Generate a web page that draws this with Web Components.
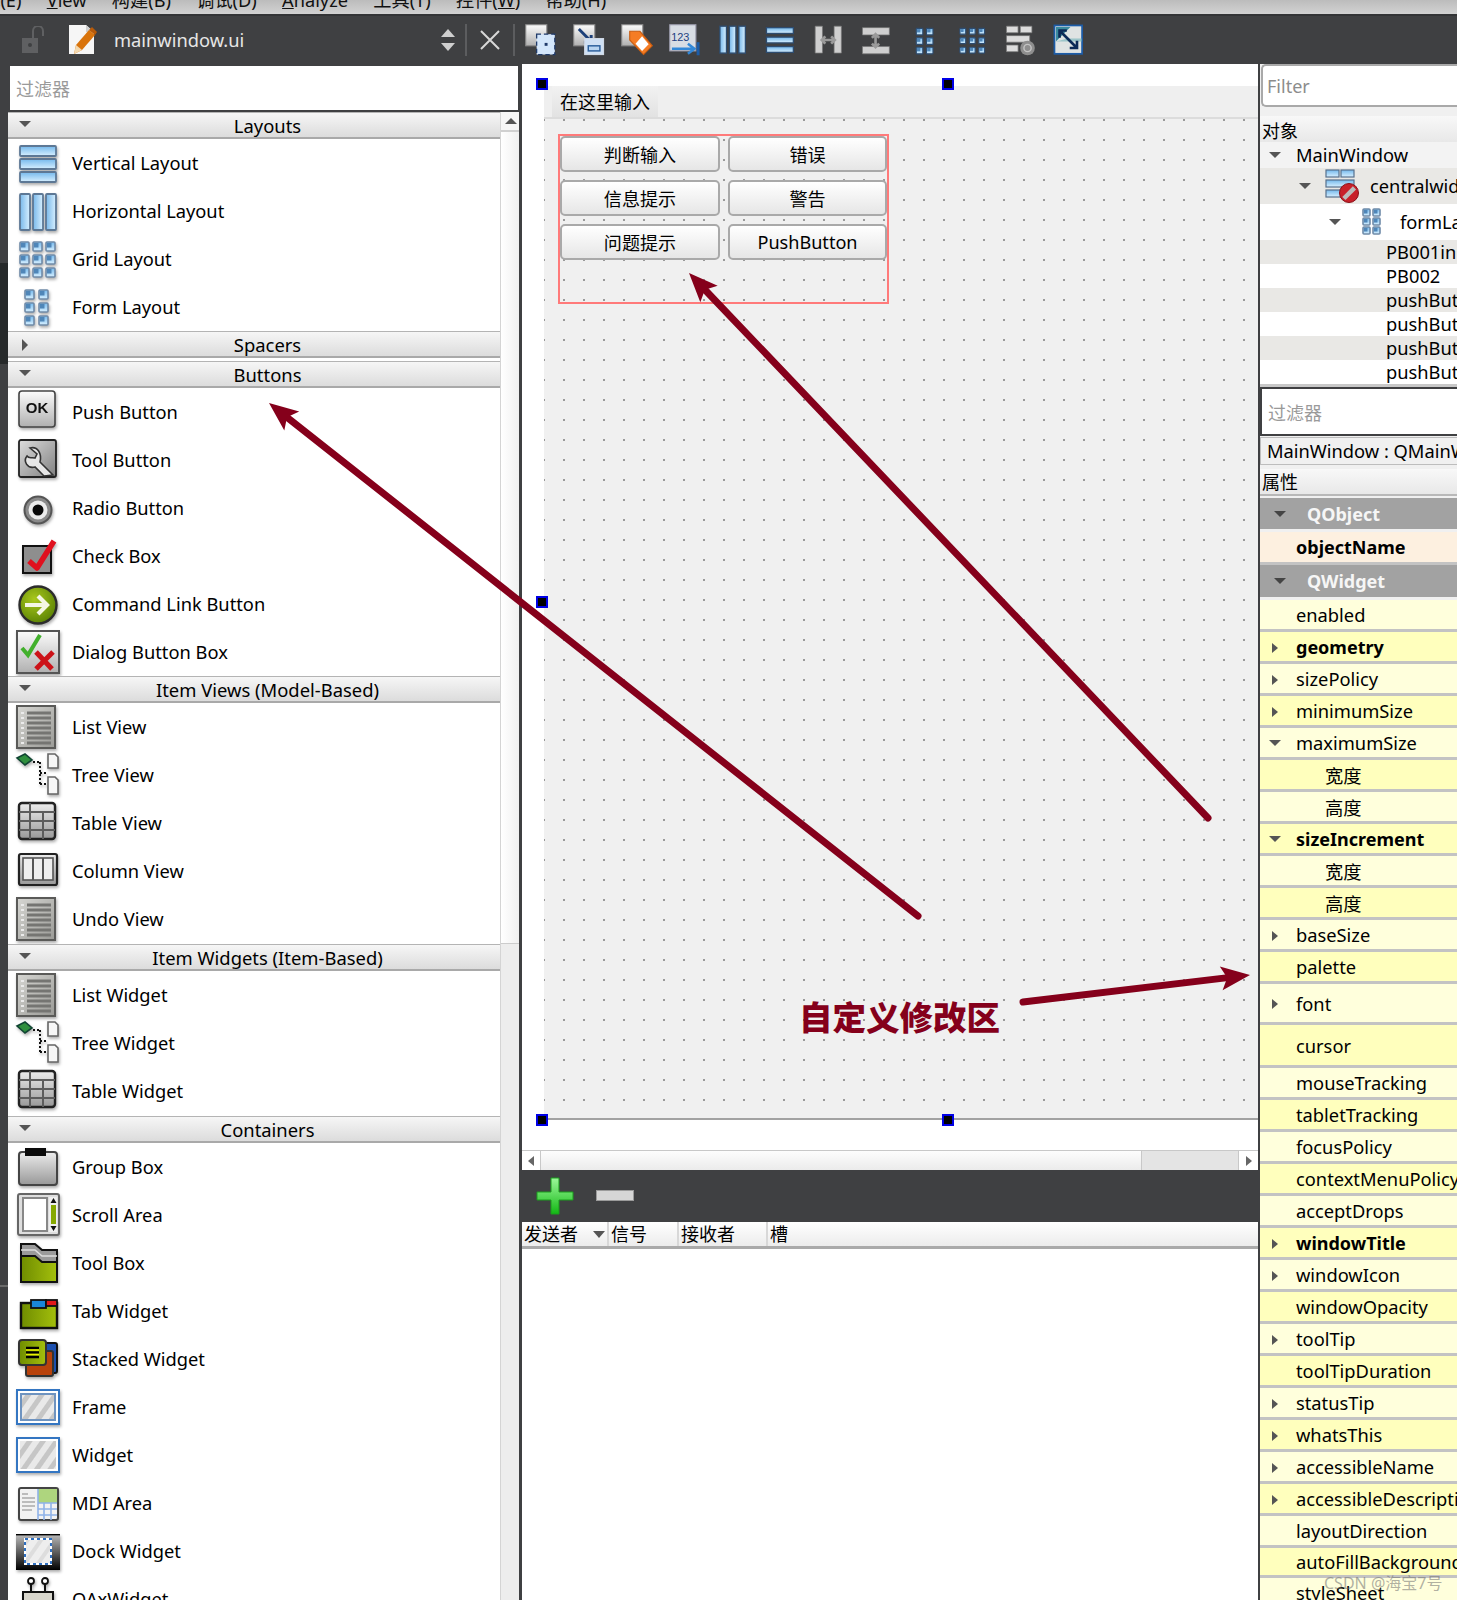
<!DOCTYPE html>
<html lang="zh">
<head>
<meta charset="utf-8">
<title>Qt Designer</title>
<style>
  html, body { margin: 0; padding: 0; background: #3f4042; }
</style>
</head>
<body>
<qd-app>
  <qd-menubar slot="menu"></qd-menubar>
  <qd-toolbar slot="tools"></qd-toolbar>

  <qd-widget-box slot="left">
    <qd-section title="Layouts">
      <qd-item icon="vlayout">Vertical Layout</qd-item>
      <qd-item icon="hlayout">Horizontal Layout</qd-item>
      <qd-item icon="grid">Grid Layout</qd-item>
      <qd-item icon="form">Form Layout</qd-item>
    </qd-section>
    <qd-section title="Spacers" closed></qd-section>
    <qd-section title="Buttons" style="margin-top:3px">
      <qd-item icon="ok">Push Button</qd-item>
      <qd-item icon="wrench">Tool Button</qd-item>
      <qd-item icon="radio">Radio Button</qd-item>
      <qd-item icon="check">Check Box</qd-item>
      <qd-item icon="link">Command Link Button</qd-item>
      <qd-item icon="dialog">Dialog Button Box</qd-item>
    </qd-section>
    <qd-section title="Item Views (Model-Based)">
      <qd-item icon="list">List View</qd-item>
      <qd-item icon="tree">Tree View</qd-item>
      <qd-item icon="table">Table View</qd-item>
      <qd-item icon="column">Column View</qd-item>
      <qd-item icon="list">Undo View</qd-item>
    </qd-section>
    <qd-section title="Item Widgets (Item-Based)" style="margin-top:1px">
      <qd-item icon="list">List Widget</qd-item>
      <qd-item icon="tree">Tree Widget</qd-item>
      <qd-item icon="table">Table Widget</qd-item>
    </qd-section>
    <qd-section title="Containers" style="margin-top:1px">
      <qd-item icon="group">Group Box</qd-item>
      <qd-item icon="scroll">Scroll Area</qd-item>
      <qd-item icon="toolbox">Tool Box</qd-item>
      <qd-item icon="tab">Tab Widget</qd-item>
      <qd-item icon="stacked">Stacked Widget</qd-item>
      <qd-item icon="frame">Frame</qd-item>
      <qd-item icon="widget">Widget</qd-item>
      <qd-item icon="mdi">MDI Area</qd-item>
      <qd-item icon="dock">Dock Widget</qd-item>
      <qd-item icon="qax">QAxWidget</qd-item>
    </qd-section>
  </qd-widget-box>

  <qd-form-editor slot="center">
    <qd-button>判断输入</qd-button>
    <qd-button>错误</qd-button>
    <qd-button>信息提示</qd-button>
    <qd-button>警告</qd-button>
    <qd-button>问题提示</qd-button>
    <qd-button>PushButton</qd-button>
  </qd-form-editor>

  <div slot="right">
    <qd-object-inspector>
      <qd-tree-row arrow level="0" h="26" bg="#f3f3f3" text-x="36">MainWindow</qd-tree-row>
      <qd-tree-row arrow level="1" h="36" bg="#e9e8e5" icon="central" text-x="110">centralwidget</qd-tree-row>
      <qd-tree-row arrow level="2" h="36" bg="#fff" icon="formsmall" text-x="140">formLayout</qd-tree-row>
      <qd-tree-row h="24" bg="#e9e8e5" text-x="126">PB001input</qd-tree-row>
      <qd-tree-row h="24" bg="#fff" text-x="126">PB002</qd-tree-row>
      <qd-tree-row h="24" bg="#e9e8e5" text-x="126">pushButton_2</qd-tree-row>
      <qd-tree-row h="24" bg="#fff" text-x="126">pushButton_3</qd-tree-row>
      <qd-tree-row h="24" bg="#e9e8e5" text-x="126">pushButton_4</qd-tree-row>
      <qd-tree-row h="24" bg="#fff" text-x="126">pushButton_5</qd-tree-row>
    </qd-object-inspector>
    <qd-property-editor>
      <qd-prop group arrow="down" h="34">QObject</qd-prop>
      <qd-prop bold peach h="33">objectName</qd-prop>
      <qd-prop group arrow="down" h="35">QWidget</qd-prop>
      <qd-prop>enabled</qd-prop>
      <qd-prop bold arrow="right">geometry</qd-prop>
      <qd-prop arrow="right">sizePolicy</qd-prop>
      <qd-prop arrow="right">minimumSize</qd-prop>
      <qd-prop arrow="down">maximumSize</qd-prop>
      <qd-prop sub>宽度</qd-prop>
      <qd-prop sub>高度</qd-prop>
      <qd-prop bold arrow="down">sizeIncrement</qd-prop>
      <qd-prop sub>宽度</qd-prop>
      <qd-prop sub>高度</qd-prop>
      <qd-prop arrow="right">baseSize</qd-prop>
      <qd-prop>palette</qd-prop>
      <qd-prop arrow="right" h="41">font</qd-prop>
      <qd-prop h="43">cursor</qd-prop>
      <qd-prop>mouseTracking</qd-prop>
      <qd-prop>tabletTracking</qd-prop>
      <qd-prop>focusPolicy</qd-prop>
      <qd-prop>contextMenuPolicy</qd-prop>
      <qd-prop>acceptDrops</qd-prop>
      <qd-prop bold arrow="right">windowTitle</qd-prop>
      <qd-prop arrow="right">windowIcon</qd-prop>
      <qd-prop>windowOpacity</qd-prop>
      <qd-prop arrow="right">toolTip</qd-prop>
      <qd-prop>toolTipDuration</qd-prop>
      <qd-prop arrow="right">statusTip</qd-prop>
      <qd-prop arrow="right">whatsThis</qd-prop>
      <qd-prop arrow="right">accessibleName</qd-prop>
      <qd-prop arrow="right">accessibleDescription</qd-prop>
      <qd-prop>layoutDirection</qd-prop>
      <qd-prop h="30">autoFillBackground</qd-prop>
      <qd-prop>styleSheet</qd-prop>
    </qd-property-editor>
  </div>
</qd-app>

<script>
(function() {
  'use strict';
  const FONT = '"Noto Sans", "Noto Sans CJK SC", sans-serif';
  const CJK = '"Noto Sans CJK SC", "Noto Sans", sans-serif';

  const DEFS = `<defs>
    <linearGradient id="b" x1="0" y1="0" x2="0" y2="1"><stop offset="0" stop-color="#74b8ec"/><stop offset="1" stop-color="#d8f0ff"/></linearGradient>
    <linearGradient id="bh" x1="0" y1="0" x2="1" y2="0"><stop offset="0" stop-color="#78b8ea"/><stop offset="1" stop-color="#d8f0ff"/></linearGradient>
    <linearGradient id="g" x1="0" y1="0" x2="0" y2="1"><stop offset="0" stop-color="#fcfcfc"/><stop offset="1" stop-color="#b0b0b0"/></linearGradient>
    <linearGradient id="g2" x1="0" y1="0" x2="0" y2="1"><stop offset="0" stop-color="#ececec"/><stop offset="1" stop-color="#989898"/></linearGradient>
    <linearGradient id="gd" x1="0" y1="0" x2="1" y2="1"><stop offset="0" stop-color="#dcdcdc"/><stop offset="1" stop-color="#808080"/></linearGradient>
    <linearGradient id="gl" x1="0" y1="0" x2="1" y2="1"><stop offset="0" stop-color="#d6d6d2"/><stop offset="1" stop-color="#9a9a96"/></linearGradient>
    <linearGradient id="o" x1="0" y1="0" x2="1" y2="0"><stop offset="0" stop-color="#6f8c00"/><stop offset="1" stop-color="#a4c00c"/></linearGradient>
    <linearGradient id="dk" x1="0" y1="0" x2="0" y2="1"><stop offset="0" stop-color="#bdbdbd"/><stop offset="1" stop-color="#000"/></linearGradient>
    <radialGradient id="gr" cx=".4" cy=".35" r=".8"><stop offset="0" stop-color="#a9c81c"/><stop offset="1" stop-color="#4d7600"/></radialGradient>
    <pattern id="st" width="11" height="11" patternUnits="userSpaceOnUse" patternTransform="rotate(35)"><rect width="11" height="11" fill="#e9e9e9"/><rect width="5" height="11" fill="#c6c6c6"/></pattern>
    <pattern id="st2" width="11" height="11" patternUnits="userSpaceOnUse" patternTransform="rotate(35)"><rect width="11" height="11" fill="#eeeeee"/><rect width="4" height="11" fill="#dddddd"/></pattern>
  </defs>`;

  const squares = (xs, ys, s, stroke) => xs.map(x => ys.map(y =>
    `<rect x="${x}" y="${y}" width="${s}" height="${s}" rx="1" fill="url(#b)" stroke="${stroke}" stroke-width="1.6"/>
     <rect x="${x + 1}" y="${y + 1}" width="${s / 2}" height="${s / 2}" fill="#4f86b8"/>`).join('')).join('');
  const listLines = [8, 13, 18, 23, 28, 33, 38].map(y =>
    `<path d="M11 ${y}h24" stroke="#757572" stroke-width="3"/><path d="M5 ${y}h3" stroke="#ebebeb" stroke-width="2"/>`).join('');
  const frameIcon = inner => `<g transform="translate(0 4)"><rect x="1" y="1" width="42" height="34" fill="#fff" stroke="#3476c2" stroke-width="2"/>${inner}</g>`;

  const ICONS = {
    vlayout: [5, 18, 31].map(y => `<rect x="4" y="${y}" width="36" height="10" rx="1" fill="url(#b)" stroke="#5d7895" stroke-width="1.8"/>`).join(''),
    hlayout: [4, 17, 30].map(x => `<rect x="${x}" y="5" width="10" height="36" rx="1" fill="url(#bh)" stroke="#5d7895" stroke-width="1.8"/>`).join(''),
    grid: squares([4, 17, 30], [5, 18, 31], 9, '#6f8aa8'),
    form: squares([9, 23], [5, 18, 31], 9, '#6f8aa8'),
    ok: `<rect x="3" y="1" width="36" height="36" rx="3" fill="url(#g)" stroke="#444" stroke-width="1.6"/>
         <text x="21" y="23" text-anchor="middle" font-family="Liberation Sans" font-weight="700" font-size="15" fill="#111">OK</text>`,
    wrench: `<rect x="3" y="2" width="37" height="37" rx="2" fill="url(#gd)" stroke="#222" stroke-width="1.8"/>
         <path d="M37 37 L24 24 C26 16 22 8 14 10 L21 16 L19 20 C15 19 13 21 11 18 C7 23 11 31 19 29 L28 38 Z" fill="#e6e6e6" stroke="#333" stroke-width="1.6"/>`,
    radio: `<circle cx="22" cy="24" r="13.5" fill="#8a8a8a" stroke="#555" stroke-width="2"/><circle cx="22" cy="24" r="9.5" fill="#ececec"/><circle cx="22" cy="24" r="5.5" fill="#0a0a0a"/>`,
    check: `<rect x="7" y="12" width="28" height="27" fill="#8e8e8e" stroke="#111" stroke-width="2"/>
         <path d="M13 27 L21 34 L38 7" fill="none" stroke="#e0101e" stroke-width="5.5" stroke-linejoin="round"/>`,
    link: `<circle cx="22" cy="23" r="18.500" fill="url(#gr)" stroke="#2c2c2c" stroke-width="2.4"/>
         <path d="M9 23h22M22 14l9 9-9 9" fill="none" stroke="#f4f6e4" stroke-width="4.2"/>`,
    dialog: `<rect x="1" y="1" width="42" height="42" fill="url(#g)" stroke="#555" stroke-width="2"/>
         <path d="M6 18l6 7 12-20" fill="none" stroke="#42b02c" stroke-width="4"/>
         <path d="M20 22l16 17M37 22L20 39" fill="none" stroke="#cc1218" stroke-width="5"/>`,
    list: `<rect x="1" y="1" width="38" height="42" fill="url(#gl)" stroke="#5a5a58" stroke-width="2"/>${listLines}`,
    tree: `<path d="M1 5l8-4 7 6-7 5z" fill="#2f8f3e" stroke="#143" stroke-width="1.6"/>
         <path d="M17 9h7M24 9v22M24 20h7M24 31h7" stroke="#111" stroke-width="2" stroke-dasharray="2 2" fill="none"/>
         <path d="M32 1h7l3 3v11H32z M32 24h7l3 3v14H32z" fill="#f6f6f6" stroke="#666" stroke-width="1.6"/>`,
    table: `<rect x="3" y="2" width="36" height="36" rx="3" fill="url(#g2)" stroke="#222" stroke-width="2.4"/>
         <path d="M3 11h36M3 20h36M3 29h36M14 2v36M27 11v27" stroke="#5c5c5c" stroke-width="2" fill="none"/>`,
    column: `<rect x="3" y="5" width="38" height="31" rx="2" fill="url(#g2)" stroke="#222" stroke-width="2.2"/>
         <rect x="7" y="9" width="30" height="22" fill="#eee" stroke="#555" stroke-width="1.6"/><path d="M17 9v22M27 9v22" stroke="#555" stroke-width="2"/>`,
    group: `<rect x="3" y="7" width="38" height="33" rx="3" fill="url(#g2)" stroke="#444" stroke-width="2"/><rect x="9" y="3" width="21" height="8" fill="#0a0a0a"/>`,
    scroll: `<rect x="2" y="1" width="41" height="41" rx="2" fill="#dedede" stroke="#666" stroke-width="2"/>
         <rect x="7" y="5" width="24" height="33" fill="#fff" stroke="#888" stroke-width="2"/>
         <rect x="33" y="4" width="8" height="35" fill="#eee"/><rect x="35" y="12" width="5" height="19" fill="#86a800"/>
         <path d="M37.5 5l3 5h-6zM37.5 38l3-5h-6z" fill="#111"/>`,
    toolbox: `<path d="M5 3h14l7 6h15v32H5z" fill="#9a9a9a" stroke="#111" stroke-width="2"/>
         <path d="M5 15h14l7 6h15v20H5z" fill="url(#o)" stroke="#111" stroke-width="2"/><path d="M5 9h14l7 6h15" stroke="#ddd" fill="none" stroke-width="1.6"/>`,
    tab: `<rect x="5" y="14" width="36" height="25" fill="url(#o)" stroke="#111" stroke-width="2.4"/>
         <rect x="15" y="11" width="15" height="8" fill="#1a86d8" stroke="#111" stroke-width="1.8"/><rect x="30" y="11" width="11" height="6" fill="#e01818" stroke="#111" stroke-width="1.8"/>`,
    stacked: `<rect x="26" y="6" width="15" height="30" rx="2" fill="#1b4fae" stroke="#111" stroke-width="2"/>
         <rect x="10" y="14" width="27" height="25" rx="2" fill="#b8420c" stroke="#333" stroke-width="2"/>
         <rect x="3" y="3" width="27" height="25" rx="3" fill="url(#o)" stroke="#333" stroke-width="2"/>
         <path d="M10 11h13M10 15.500h13M10 20h13" stroke="#000" stroke-width="2.4"/><path d="M10 13h13M10 17.500h13" stroke="#e8f000" stroke-width="1.6"/>`,
    frame: frameIcon(`<rect x="5" y="5" width="34" height="26" fill="url(#st)" stroke="#6e93c0" stroke-width="2"/>`),
    widget: frameIcon(`<rect x="4" y="4" width="36" height="28" fill="url(#st)"/>`),
    mdi: `<g transform="translate(0 6)"><rect x="3" y="1" width="39" height="32" rx="2" fill="#f2f2f2" stroke="#444" stroke-width="2"/>
         <rect x="22" y="2" width="19" height="14" fill="#aed57e"/><path d="M6 7h6M6 11h13M6 15h13M6 19h13M6 23h10" stroke="#aaa" stroke-width="1.4"/>
         <path d="M22 16h19M22 22h19M22 28h19M22 2v31M28 16v17M35 16v17" stroke="#8fb2e8" stroke-width="1.6"/></g>`,
    dock: `<g transform="translate(0 5)"><rect x="0" y="0" width="44" height="36" fill="url(#dk)"/><rect x="0" y="0" width="44" height="1.400" fill="#000"/>
         <rect x="9" y="5" width="26" height="25" fill="url(#st2)" stroke="#fff" stroke-width="2"/><rect x="9" y="5" width="26" height="25" fill="none" stroke="#2f6fc0" stroke-width="2" stroke-dasharray="3 3"/></g>`,
    qax: `<circle cx="15" cy="4" r="3" fill="#fff" stroke="#111" stroke-width="1.800"/><circle cx="29" cy="4" r="3" fill="#fff" stroke="#111" stroke-width="1.800"/>
         <path d="M15 7v8M29 7v8" stroke="#111" stroke-width="2"/><rect x="7" y="15" width="30" height="22" fill="#d8d6cc" stroke="#111" stroke-width="2"/>`,
    central: `<rect x="2" y="2" width="13" height="7" fill="url(#b)" stroke="#57708c" stroke-width="1.200"/><rect x="17" y="2" width="13" height="7" fill="url(#b)" stroke="#57708c" stroke-width="1.200"/>
         <rect x="2" y="12" width="28" height="7" fill="url(#b)" stroke="#57708c" stroke-width="1.200"/><rect x="2" y="22" width="24" height="7" fill="url(#b)" stroke="#57708c" stroke-width="1.200"/>
         <circle cx="25" cy="25" r="9.500" fill="#c8202a" stroke="#8a1018"/><rect x="17.500" y="23" width="15" height="4.500" fill="#bbb" transform="rotate(-45 25 25)"/>`,
    formsmall: squares([10, 20], [6, 15, 24], 7, '#6f8aa8'),
    // toolbar, drawn on the same 44 box at a larger stroke
    t1: `<rect x="1" y="1" width="29" height="29" fill="url(#g)" stroke="#888" stroke-width="1.500"/>
         <rect x="16" y="14" width="25" height="28" fill="#d3e6fb" stroke="#1f3a6a" stroke-width="1.800" stroke-dasharray="6 4"/><rect x="27" y="26" width="4" height="4" fill="#1f3a6a"/>`,
    t2: `<rect x="1" y="1" width="29" height="29" fill="url(#g)" stroke="#888" stroke-width="1.500"/>
         <path d="M8 7l16 16m-9 2h10V15" fill="none" stroke="#1c3f78" stroke-width="4"/>
         <rect x="16" y="20" width="26" height="22" fill="#cfe0f4" stroke="#cfd8e4" stroke-width="1.500"/><rect x="20" y="29" width="18" height="9" fill="#2b5f9c"/><rect x="22" y="31" width="14" height="5" fill="#b8d4f0"/>`,
    t3: `<rect x="1" y="1" width="29" height="29" fill="url(#g)" stroke="#888" stroke-width="1.500"/>
         <path d="M12 10h14l17 20-12 12L12 22z" fill="#f57c24" stroke="#c85c10" stroke-width="1.500"/><path d="M29 17l9 11-9 9-9-10z" fill="#fff"/>`,
    t4: `<rect x="1" y="1" width="36" height="36" fill="#d8dde4" stroke="#99a" stroke-width="1.500"/>
         <text x="3" y="24" font-family="Liberation Sans" font-size="15" fill="#1d3f80">123</text>
         <path d="M4 34h30M26 27l9 7-9 7" fill="none" stroke="#3288d8" stroke-width="3.500"/><path d="M40 25v18" stroke="#1c5ca8" stroke-width="4"/>`,
    t5: [4, 17, 30].map(x => `<rect x="${x}" y="3" width="9" height="37" fill="url(#bh)" stroke="#2d4c70" stroke-width="1.800"/>`).join(''),
    t6: [5, 18, 31].map(y => `<rect x="2" y="${y}" width="37" height="8" fill="url(#b)" stroke="#2d4c70" stroke-width="1.800"/>`).join(''),
    t7: `<path d="M3 3h10v37H3zM29 3h10v37H29z" fill="#cfcfcf" stroke="#777" stroke-width="1"/><path d="M13 22h16M17 17l-5 5 5 5M25 17l5 5-5 5" fill="none" stroke="#9a9a9a" stroke-width="3.600"/>`,
    t8: `<path d="M2 5h37v10H2zM2 31h37v10H2z" fill="#cfcfcf" stroke="#777" stroke-width="1"/><path d="M20 15v16M15 19l5-5 5 5M15 27l5 5 5-5" fill="none" stroke="#9a9a9a" stroke-width="3.600"/>`,
    t9: squares([10, 24], [6, 19, 32], 9, '#2d4c70'),
    t10: squares([4, 17, 30], [6, 19, 32], 8, '#2d4c70'),
    t11: `<path d="M2 3h16v9H2zM21 3h16v9H21zM2 16h32v9H2zM2 29h16v9H2z" fill="#dcdcdc" stroke="#777"/>
         <circle cx="31" cy="33" r="10" fill="#8e8e8e"/><circle cx="31" cy="33" r="5" fill="none" stroke="#c4c4c4" stroke-width="2"/>`,
    t12: `<rect x="2" y="2" width="38" height="39" fill="#dfe3e3" stroke="#1c5ca8" stroke-width="2.400"/><path d="M4 4h20l-20 20z" fill="#3a8a9e"/><path d="M4 24h36v-4H20z" fill="#6fb0b8" opacity=".6"/>
         <path d="M10 10l22 22M9 19V9h10M33 23v10H23" fill="none" stroke="#0c2a58" stroke-width="3.600"/>`
  };

  class QdIcon extends HTMLElement {
    constructor() { super(); this.attachShadow({mode: 'open'}); }
    connectedCallback() {
      const size = this.getAttribute('size') || 44;
      const shade = this.hasAttribute('flat') ? '' : 'filter:drop-shadow(1px 2px 1.5px rgba(0,0,0,.32));';
      this.shadowRoot.innerHTML = `<style>:host{display:block;width:${size}px;height:${size}px;flex:none}
        svg{display:block;overflow:visible;${shade}}</style>
        <svg width="${size}" height="${size}" viewBox="0 0 44 44">${DEFS}${ICONS[this.getAttribute('name')] || ''}</svg>`;
    }
  }

  class QdApp extends HTMLElement {
    constructor() { super(); this.attachShadow({mode: 'open'}); }
    connectedCallback() {
      this.shadowRoot.innerHTML = `<style>
        :host { display: block; position: relative; width: 1457px; height: 1600px; overflow: hidden;
          background: #3f4042; font-family: ${FONT}; font-size: 18px; color: #000; }
        .main { display: flex; height: 1536px; }
        .strip { width: 8px; flex: none; background: linear-gradient(#3f4042 0 199px, #26292a 199px 300px, #3f4042 300px 1221px, #6a6a6a 1221px 1223px, #3f4042 1223px); }
        .left { width: 511px; flex: none; margin-right: 3px; }
        .center { width: 736px; flex: none; margin-right: 2px; }
        .right { width: 197px; flex: none; overflow: hidden; background: #f0f0f0; }
      </style>
      <slot name="menu"></slot>
      <slot name="tools"></slot>
      <div class="main">
        <div class="strip"></div>
        <div class="left"><slot name="left"></slot></div>
        <div class="center"><slot name="center"></slot></div>
        <div class="right"><slot name="right"></slot></div>
      </div>
      <qd-annotations></qd-annotations>`;
    }
  }

  class QdMenubar extends HTMLElement {
    constructor() { super(); this.attachShadow({mode: 'open'}); }
    connectedCallback() {
      this.shadowRoot.innerHTML = `<style>
        :host { display: block; height: 14px; overflow: hidden; border-bottom: 2px solid #333436;
          background: linear-gradient(#bcbcbc, #d2d2d2); }
        .row { display: flex; gap: 25.300px; margin: -12px 0 0 -36px; line-height: 24px; white-space: nowrap; color: #111; font-size: 18.200px; }
        u { text-underline-offset: 1px; }
      </style>
      <div class="row">
        <span>编辑(E)</span><span><u>V</u>iew</span><span>构建(B)</span><span>调试(D)</span>
        <span><u>A</u>nalyze</span><span>工具(T)</span><span>控件(<u>W</u>)</span><span>帮助(H)</span>
      </div>`;
    }
  }

  class QdToolbar extends HTMLElement {
    constructor() { super(); this.attachShadow({mode: 'open'}); }
    connectedCallback() {
      const tools = ['t1', 't2', 't3', 't4', 't5', 't6', 't7', 't8', 't9', 't10', 't11', 't12'];
      this.shadowRoot.innerHTML = `<style>
        :host { display: flex; align-items: center; height: 48px; background: #3f4042; color: #e6e6e6; }
        .name { font-size: 18.300px; width: 327px; margin: 0 0 2px 16px; white-space: nowrap; }
        .sep { width: 2px; height: 32px; background: #5c5d5f; flex: none; }
        .tools { display: flex; gap: 16px; margin-left: 10px; }
        svg { flex: none; display: block; }
      </style>
      <svg width="26" height="28" viewBox="0 0 26 28" style="margin-left:21px"><rect x="1" y="12" width="16" height="15" fill="#5f6062"/><path d="M12 12V5a5 5 0 0 1 10 0v5" fill="none" stroke="#5f6062" stroke-width="2"/><circle cx="9" cy="19" r="2" fill="#3f4042"/></svg>
      <svg width="30" height="32" viewBox="0 0 30 32" style="margin-left:21px">
        <path d="M1 1h17l8 7v22H1z" fill="#f6f6f6"/><path d="M18 1v7h8" fill="#cfcfcf"/>
        <path d="M6 30l2-9L21 6l6 5-13 15z" fill="#d9740c"/><path d="M6 30l2-9 6 5z" fill="#f3d9b0"/><path d="M21 6l3-3 5 5-2 3z" fill="#b85a08"/>
      </svg>
      <div class="name">mainwindow.ui</div>
      <svg width="16" height="24" viewBox="0 0 16 24" style="margin-left:-1px"><path d="M8 1l7 8H1zM8 23l7-8H1z" fill="#cfcfcf"/></svg>
      <div class="sep" style="margin-left:9px"></div>
      <svg width="22" height="22" viewBox="0 0 22 22" style="margin-left:12px"><path d="M2 2l18 18M20 2L2 20" stroke="#d8d8d8" stroke-width="2"/></svg>
      <div class="sep" style="margin-left:12px"></div>
      <div class="tools">${tools.map(t => `<qd-icon name="${t}" size="32" flat></qd-icon>`).join('')}</div>`;
    }
  }

  class QdWidgetBox extends HTMLElement {
    constructor() { super(); this.attachShadow({mode: 'open'}); }
    connectedCallback() {
      this.shadowRoot.innerHTML = `<style>
        :host { display: block; height: 1536px; overflow: hidden; }
        .filter { height: 44px; margin: 2px 1px 2px 2px; padding-left: 6px; background: #fff; color: #9a9a9a;
          display: flex; align-items: center; font-size: 18px; }
        .body { display: flex; height: 1488px; background: #fff; }
        .list { width: 492px; flex: none; overflow: hidden; }
        .bar { width: 19px; flex: none; border-left: 1px solid #d4d4d4; background: #ededed; box-sizing: content-box; }
        .up { height: 18px; background: #f6f6f6; border-bottom: 2px solid #d0d0d0; display: flex; justify-content: center; align-items: center; }
        .up i { border: 6px solid transparent; border-top: 0; border-bottom: 6px solid #555; }
        .thumb { height: 811px; background: linear-gradient(90deg, #fff, #efefef); border-bottom: 1px solid #ccc; }
      </style>
      <div class="filter">过滤器</div>
      <div class="body">
        <div class="list"><slot></slot></div>
        <div class="bar"><div class="up"><i></i></div><div class="thumb"></div></div>
      </div>`;
    }
  }

  class QdSection extends HTMLElement {
    constructor() { super(); this.attachShadow({mode: 'open'}); }
    connectedCallback() {
      const closed = this.hasAttribute('closed');
      this.shadowRoot.innerHTML = `<style>
        :host { display: block; }
        .head { height: 27px; box-sizing: border-box; position: relative; display: flex; align-items: center; justify-content: center;
          padding: 1px 0 0 27px; background: linear-gradient(#f6f6f6, #dcdcdc);
          border-top: 1px solid #b4b4b4; border-bottom: 2px solid #a9a9a9; font-size: 18.400px; line-height: 24px; }
        .arrow { position: absolute; left: 11px; top: 8px; width: 0; height: 0; }
        .down { border: 6px solid transparent; border-top: 6px solid #555; border-bottom: 0; }
        .rt { left: 14px; top: 7px; border: 6px solid transparent; border-left: 6px solid #555; border-right: 0; }
      </style>
      <div class="head"><span class="arrow ${closed ? 'rt' : 'down'}"></span>${this.getAttribute('title')}</div>
      <slot></slot>`;
    }
  }

  class QdItem extends HTMLElement {
    constructor() { super(); this.attachShadow({mode: 'open'}); }
    connectedCallback() {
      this.shadowRoot.innerHTML = `<style>
        :host { display: flex; align-items: center; height: 48px; padding-left: 8px; white-space: nowrap; font-size: 18.300px; }
        span { margin: 0 0 2px 12px; }
      </style>
      <qd-icon name="${this.getAttribute('icon')}"></qd-icon><span><slot></slot></span>`;
    }
  }

  class QdButton extends HTMLElement {
    constructor() { super(); this.attachShadow({mode: 'open'}); }
    connectedCallback() {
      this.shadowRoot.innerHTML = `<style>
        :host { display: flex; align-items: center; justify-content: center; box-sizing: border-box; height: 36px;
          border: 2px solid #a9a9a9; border-radius: 5px; background: linear-gradient(#ffffff, #e6e6e6); font-size: 18.100px; }
      </style><slot></slot>`;
    }
  }

  class QdFormEditor extends HTMLElement {
    constructor() { super(); this.attachShadow({mode: 'open'}); }
    connectedCallback() {
      const handles = [[14, 14], [420, 14], [14, 532], [14, 1050], [420, 1050]];
      this.shadowRoot.innerHTML = `<style>
        :host { display: block; height: 1536px; background: #fff; }
        .stage { height: 1086px; position: relative; overflow: hidden; box-sizing: border-box; padding: 22px 0 0 22px; }
        .form { height: 1032px; border-bottom: 2px solid #a2a2a2; background: #f0f0f0; box-sizing: content-box; }
        .band { height: 31px; border-bottom: 2px solid #dcdcdc; background: #efefef; display: flex; padding-left: 8px; }
        .tab { width: 106px; box-sizing: border-box; text-align: center; line-height: 32px; font-size: 18px;
          background: linear-gradient(#f2f2f2, #e2e2e2); }
        .canvas { height: 999px; padding: 15px 0 0 14px; box-sizing: border-box;
          background: conic-gradient(at 2px 2px, #f0f0f0 75%, #999 0) 19px 0 / 20px 20px; }
        .layout { width: 331px; height: 170px; box-sizing: border-box; border: 2px solid #ff7a7a; display: grid;
          grid-template-columns: 160px 159px; grid-auto-rows: 36px; gap: 8px; }
        .handle { position: absolute; width: 8px; height: 8px; background: #000; border: 2px solid #0000e6; }
        .hbar { height: 20px; box-sizing: border-box; display: flex; border-top: 1px solid #c8c8c8; background: #fff; }
        .btn { width: 18px; display: flex; align-items: center; justify-content: center; border-right: 1px solid #c8c8c8; flex: none; }
        .btn i { border: 5px solid transparent; border-left: 0; border-right: 6px solid #666; }
        .btn.r { border-right: 0; border-left: 1px solid #c8c8c8; width: 19px; }
        .btn.r i { border: 5px solid transparent; border-right: 0; border-left: 6px solid #666; }
        .thumb { width: 600px; flex: none; background: linear-gradient(#fdfdfd, #ebebeb); }
        .track { flex: 1; background: #e4e4e4; border-left: 1px solid #c8c8c8; }
      </style>
      <div class="stage">
        <div class="form">
          <div class="band"><div class="tab">在这里输入</div></div>
          <div class="canvas"><div class="layout"><slot></slot></div></div>
        </div>
        ${handles.map(h => `<div class="handle" style="left:${h[0]}px;top:${h[1]}px"></div>`).join('')}
      </div>
      <div class="hbar"><div class="btn"><i></i></div><div class="thumb"></div><div class="track"></div><div class="btn r"><i></i></div></div>
      <qd-signal-panel></qd-signal-panel>`;
    }
  }

  class QdSignalPanel extends HTMLElement {
    constructor() { super(); this.attachShadow({mode: 'open'}); }
    connectedCallback() {
      this.shadowRoot.innerHTML = `<style>
        :host { display: block; }
        .bar { height: 52px; background: #3f4042; display: flex; align-items: center; gap: 22px; padding-left: 14px; }
        .head { height: 27px; box-sizing: border-box; display: flex; background: linear-gradient(#fff, #ececec);
          border-bottom: 3px solid #aaa; font-size: 18px; line-height: 24px; }
        .c { box-sizing: border-box; border-right: 2px solid #d8d8d8; padding-left: 2px; position: relative; white-space: nowrap; flex: none; }
        .c i { position: absolute; left: 71px; top: 9px; border: 6px solid transparent; border-top: 7px solid #555; border-bottom: 0; }
      </style>
      <div class="bar">
        <svg width="38" height="38" viewBox="0 0 38 38"><defs><linearGradient id="p" x1="0" y1="0" x2="0" y2="1"><stop offset="0" stop-color="#9cf79a"/><stop offset="1" stop-color="#12b814"/></linearGradient></defs>
          <path d="M15 1h8v14h14v8H23v14h-8V23H1v-8h14z" fill="url(#p)" stroke="#1a9e1c"/></svg>
        <svg width="38" height="12" viewBox="0 0 38 12"><rect x=".5" y=".5" width="37" height="10" fill="#d6d6d6" stroke="#9b9b9b"/></svg>
      </div>
      <div class="head">
        <div class="c" style="width:87px">发送者<i></i></div>
        <div class="c" style="width:70px">信号</div>
        <div class="c" style="width:89px">接收者</div>
        <div class="c" style="border:0">槽</div>
      </div>`;
    }
  }

  class QdTreeRow extends HTMLElement {
    constructor() { super(); this.attachShadow({mode: 'open'}); }
    connectedCallback() {
      const level = +this.getAttribute('level') || 0;
      const textX = this.getAttribute('text-x') || 37;
      const icon = this.getAttribute('icon');
      const arrow = this.hasAttribute('arrow') ? `<i style="left:${9 + level * 30}px"></i>` : '';
      const ic = icon ? `<qd-icon flat name="${icon}" size="44" style="position:absolute;left:${icon === 'central' ? 64 : 93}px;top:${icon === 'central' ? 0 : -1}px"></qd-icon>` : '';
      this.shadowRoot.innerHTML = `<style>
        :host { display: block; position: relative; height: ${this.getAttribute('h')}px; line-height: ${this.getAttribute('h')}px;
          background: ${this.getAttribute('bg')}; white-space: nowrap; font-size: 18.300px; }
        i { position: absolute; top: 50%; margin-top: -3px; border: 6px solid transparent; border-top: 6px solid #555; border-bottom: 0; }
        span { position: absolute; left: ${textX}px; }
      </style>${arrow}${ic}<span><slot></slot></span>`;
    }
  }

  class QdObjectInspector extends HTMLElement {
    constructor() { super(); this.attachShadow({mode: 'open'}); }
    connectedCallback() {
      this.shadowRoot.innerHTML = `<style>
        :host { display: block; background: #f0f0f0; }
        .filter { height: 43px; box-sizing: border-box; margin-left: 1px; background: #fff; border: 2px solid #a9a9a9; border-right: 0;
          border-radius: 5px 0 0 5px; color: #8c8c8c; padding-left: 4px; display: flex; align-items: center; font-size: 18px; }
        .head { height: 26px; margin-top: 9px; line-height: 31px; padding-left: 2px; font-size: 18px; background: linear-gradient(#f8f8f8, #e8e8e8); }
        .rows { border-bottom: 3px solid #c8c8c8; }
      </style>
      <div class="filter">Filter</div>
      <div class="head">对象</div>
      <div class="rows"><slot></slot></div>`;
    }
  }

  class QdPropertyEditor extends HTMLElement {
    constructor() { super(); this.attachShadow({mode: 'open'}); }
    connectedCallback() {
      this.shadowRoot.innerHTML = `<style>
        :host { display: block; }
        .filter { height: 49px; box-sizing: border-box; border: solid #3f4042; border-width: 2px 0 2px 2px; background: #fff; color: #9a9a9a;
          padding-left: 6px; display: flex; align-items: center; font-size: 18px; }
        .cls { height: 28px; margin-top: 1px; box-sizing: border-box; line-height: 26px; padding-left: 6px; background: #f0f0f0; border: 1px solid #bdbdbd; border-right: 0; white-space: nowrap; font-size: 18.300px; }
        .head { height: 25px; margin-top: 4px; line-height: 26px; padding-left: 2px; font-size: 18px; background: linear-gradient(#f8f8f8, #e8e8e8); border-bottom: 2px solid #b8b8b8; }
        .props { margin-top: 2px; }
      </style>
      <div class="filter">过滤器</div>
      <div class="cls">MainWindow : QMainWindow</div>
      <div class="head">属性</div>
      <div class="props"><slot></slot></div>`;
    }
  }

  class QdProp extends HTMLElement {
    constructor() { super(); this.attachShadow({mode: 'open'}); }
    connectedCallback() {
      const group = this.hasAttribute('group');
      const arrow = this.getAttribute('arrow');
      const bold = group || this.hasAttribute('bold');
      const h = this.getAttribute('h') || 32;
      const pad = group ? 47 : this.hasAttribute('sub') ? 65 : 36;
      const mark = arrow === 'right' ? '<i class="rt"></i>' : arrow === 'down' ? '<i class="dn"></i>' : '';
      const bg = group ? '#a2a2a2' : this.hasAttribute('peach') ? '#fdf0e0' : 'var(--row, #ffffdc)';
      this.shadowRoot.innerHTML = `<style>
        :host { display: flex; align-items: center; position: relative; box-sizing: border-box; height: ${h}px;
          padding-left: ${pad}px; background: ${bg}; border-bottom: 3px solid ${group ? '#f0f0f0' : '#c3c3c3'};
          white-space: nowrap; font-size: ${bold ? 18 : 18.3}px; font-weight: ${bold ? 700 : 400};
          color: ${group ? '#f6f6f6' : '#000'}; }
        :host(:nth-child(odd)) { --row: #ffffbd; }
        i { position: absolute; }
        .rt { left: 12px; top: 50%; margin-top: -4px; border: 5px solid transparent; border-left: 6px solid #555; border-right: 0; }
        .dn { left: ${group ? 14 : 9}px; top: 50%; margin-top: -3px; border: 6px solid transparent; border-top: 6px solid ${group ? '#444' : '#555'}; border-bottom: 0; }
      </style>${mark}<slot></slot>`;
    }
  }

  // the red notes drawn on top of the screenshot
  function arrow(x1, y1, x2, y2) {
    const a = Math.atan2(y2 - y1, x2 - x1), c = Math.cos(a), s = Math.sin(a);
    const pt = (l, w) => `${(x2 - c * l - s * w).toFixed(1)},${(y2 - s * l + c * w).toFixed(1)}`;
    return `<line x1="${x1}" y1="${y1}" x2="${x2 - c * 20}" y2="${y2 - s * 20}" stroke="#85001b" stroke-width="7" stroke-linecap="round"/>
      <polygon points="${x2},${y2} ${pt(29, 12)} ${pt(23, 0)} ${pt(29, -12)}" fill="#85001b"/>`;
  }

  class QdAnnotations extends HTMLElement {
    constructor() { super(); this.attachShadow({mode: 'open'}); }
    connectedCallback() {
      this.shadowRoot.innerHTML = `<style>
        :host { position: absolute; inset: 0; pointer-events: none; }
        svg { position: absolute; left: 0; top: 0; }
        .note { position: absolute; left: 799px; top: 993px; font: 900 33.500px/46px ${CJK}; color: #85001b; white-space: nowrap; }
        .mark { position: absolute; left: 1324px; top: 1572px; font: 16px/22px ${FONT}; color: rgba(110,110,110,.55); white-space: nowrap; }
      </style>
      <svg width="1457" height="1600">${arrow(918, 916, 269, 403)}${arrow(1208, 818, 689, 273)}${arrow(1023, 1002, 1250, 975)}</svg>
      <div class="note">自定义修改区</div>
      <div class="mark">CSDN @海宝7号</div>`;
    }
  }

  customElements.define('qd-icon', QdIcon);
  customElements.define('qd-app', QdApp);
  customElements.define('qd-menubar', QdMenubar);
  customElements.define('qd-toolbar', QdToolbar);
  customElements.define('qd-widget-box', QdWidgetBox);
  customElements.define('qd-section', QdSection);
  customElements.define('qd-item', QdItem);
  customElements.define('qd-button', QdButton);
  customElements.define('qd-form-editor', QdFormEditor);
  customElements.define('qd-signal-panel', QdSignalPanel);
  customElements.define('qd-tree-row', QdTreeRow);
  customElements.define('qd-object-inspector', QdObjectInspector);
  customElements.define('qd-property-editor', QdPropertyEditor);
  customElements.define('qd-prop', QdProp);
  customElements.define('qd-annotations', QdAnnotations);
}());
</script>
</body>
</html>
